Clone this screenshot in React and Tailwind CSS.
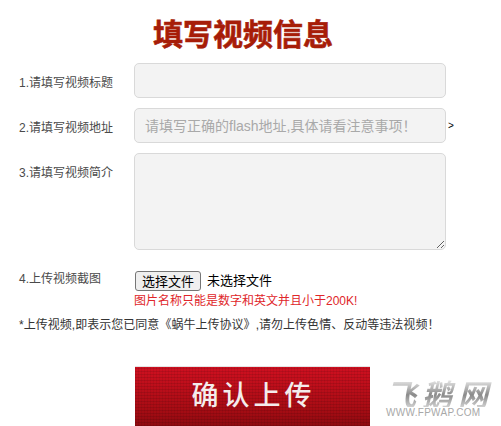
const fieldClass = 'block w-[312px] border border-[#d9d9d9] rounded-[5px] bg-[#f3f3f3] outline-none'

function Label({ children, className = '' }) {
  return <div className={`w-[115px] shrink-0 text-[12px] leading-[16px] text-[#4a4a4a] ${className}`}>{children}</div>
}

export default function App() {
  return (
    <div className="w-[501px] h-[426px] overflow-hidden bg-white font-['Liberation_Sans','Noto_Sans_CJK_SC',sans-serif]">
      <h1 className="pt-[17px] pl-[153px] text-[30px] leading-[36px] font-bold text-[#a71d08] [-webkit-text-stroke:0.6px_#a71d08]">填写视频信息</h1>

      <div className="mt-[10px] pl-[19px] flex items-center">
        <Label className="pt-[4px]">1.请填写视频标题</Label>
        <input className={`${fieldClass} h-[35px]`} />
      </div>

      <div className="mt-[10px] pl-[19px] flex items-center">
        <Label className="pt-[4px]">2.请填写视频地址</Label>
        <input
          className={`${fieldClass} h-[35px] px-[10px] text-[14px] placeholder:text-[#a9a9a9]`}
          placeholder="请填写正确的flash地址,具体请看注意事项！"
        />
        <span className="ml-[2px] text-[10px] leading-none text-black">&gt;</span>
      </div>

      <div className="mt-[10px] pl-[19px] flex items-start">
        <Label className="pt-[12px]">3.请填写视频简介</Label>
        <textarea className={`${fieldClass} h-[97px]`} />
      </div>

      <div className="mt-[21px] pl-[19px] flex items-start">
        <Label>4.上传视频截图</Label>
        <div>
          <div className="flex items-center pl-[1px]">
            <button className="h-[20px] w-[66px] border border-[#767676] rounded-[3px] bg-[#efefef] text-[13px] leading-none text-black">选择文件</button>
            <span className="ml-[6px] text-[13px] leading-[20px] text-black">未选择文件</span>
          </div>
          <p className="mt-[2px] text-[12px] leading-[16px] text-[#e0262a]">图片名称只能是数字和英文并且小于200K!</p>
        </div>
      </div>

      <p className="mt-[8px] pl-[19px] text-[12px] leading-[16px] tracking-[0.03px] text-[#333]">*上传视频,即表示您已同意《蜗牛上传协议》,请勿上传色情、反动等违法视频！</p>

      <div className="mt-[33px] pl-[135px] flex items-start">
        <button className="w-[235px] h-[60px] shrink-0 border-t border-[#e4e4e4] bg-[#b70f18] bg-[repeating-linear-gradient(0deg,rgba(0,0,0,0.1)_0px,rgba(0,0,0,0.1)_1px,transparent_1px,transparent_3px),repeating-linear-gradient(90deg,rgba(0,0,0,0.06)_0px,rgba(0,0,0,0.06)_1px,transparent_1px,transparent_3px),linear-gradient(180deg,#cf1020,#a80c14_70%,#8f0a10)] pb-[7px] pl-[2px] text-[27px] leading-none tracking-[4px] font-medium text-[#f4ecec] font-['Noto_Sans_CJK_SC',sans-serif]">
          确认上传
        </button>
        <div className="ml-[16px] mt-[14px] flex flex-col items-start">
          <div className="pr-[4px] text-[30px] leading-[27px] tracking-[6px] font-bold italic bg-[linear-gradient(180deg,#e8e8e8,#8a8a8a_55%,#cfcfcf)] bg-clip-text text-transparent font-['Noto_Sans_CJK_SC',sans-serif]">飞鹅网</div>
          <div className="mt-[1px] text-[10px] leading-[10px] tracking-[0.3px] text-[#a8a8a8]">WWW.FPWAP.COM</div>
        </div>
      </div>
    </div>
  )
}
